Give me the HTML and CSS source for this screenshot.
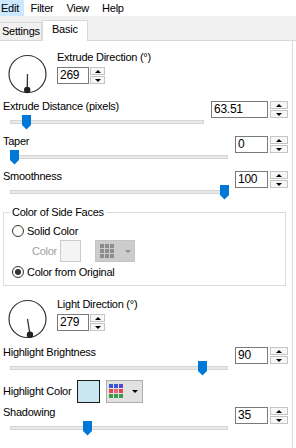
FILE: index.html
```html
<!DOCTYPE html>
<html>
<head>
  <title>Extrude</title>
  <link rel="stylesheet" href="styles.css">
</head>
<body>

  <div class="menubar">
    <span class="menu-item active">Edit</span>
    <span class="menu-item">Filter</span>
    <span class="menu-item">View</span>
    <span class="menu-item">Help</span>
  </div>

  <div class="tabs">
    <div class="tab">Settings</div>
    <div class="tab selected">Basic</div>
  </div>

  <div class="panel">

    <div class="dial-row first">
      <svg class="dial" width="40" height="40" viewBox="0 0 40 40">
        <circle cx="19.5" cy="20" r="18.5" fill="none" stroke="#333" stroke-width="1.2"/>
        <line x1="19.5" y1="20" x2="19.2" y2="36" stroke="#333" stroke-width="1.3"/>
        <circle cx="19.2" cy="36" r="3.2" fill="#222"/>
      </svg>
      <div class="dial-info">
        <div class="label">Extrude Direction (°)</div>
        <div class="spin angle">
          <div class="spin-value">269</div>
          <div class="spin-buttons">
            <div class="spin-btn"><span class="arrow-up"></span></div>
            <div class="spin-btn"><span class="arrow-down"></span></div>
          </div>
        </div>
      </div>
    </div>

    <div class="slider-row">
      <div class="slider-col">
        <div class="label">Extrude Distance (pixels)</div>
        <div class="slider">
          <div class="track"></div>
          <svg class="thumb" style="left:12px" width="9" height="15" viewBox="0 0 9 15"><polygon points="0,0 9,0 9,10 4.5,14.5 0,10" fill="#0078d7"/></svg>
        </div>
      </div>
      <div class="spin">
        <div class="spin-value wide">63.51</div>
        <div class="spin-buttons">
          <div class="spin-btn"><span class="arrow-up"></span></div>
          <div class="spin-btn"><span class="arrow-down"></span></div>
        </div>
      </div>
    </div>

    <div class="slider-row">
      <div class="slider-col">
        <div class="label">Taper</div>
        <div class="slider">
          <div class="track"></div>
          <svg class="thumb" style="left:0px" width="9" height="15" viewBox="0 0 9 15"><polygon points="0,0 9,0 9,10 4.5,14.5 0,10" fill="#0078d7"/></svg>
        </div>
      </div>
      <div class="spin">
        <div class="spin-value">0</div>
        <div class="spin-buttons">
          <div class="spin-btn"><span class="arrow-up"></span></div>
          <div class="spin-btn"><span class="arrow-down"></span></div>
        </div>
      </div>
    </div>

    <div class="slider-row">
      <div class="slider-col">
        <div class="label">Smoothness</div>
        <div class="slider">
          <div class="track"></div>
          <svg class="thumb" style="left:210px" width="9" height="15" viewBox="0 0 9 15"><polygon points="0,0 9,0 9,10 4.5,14.5 0,10" fill="#0078d7"/></svg>
        </div>
      </div>
      <div class="spin">
        <div class="spin-value">100</div>
        <div class="spin-buttons">
          <div class="spin-btn"><span class="arrow-up"></span></div>
          <div class="spin-btn"><span class="arrow-down"></span></div>
        </div>
      </div>
    </div>

    <fieldset class="group">
      <legend>Color of Side Faces</legend>
      <div class="radio-row first">
        <span class="radio"></span>
        <span>Solid Color</span>
      </div>
      <div class="color-row">
        <span class="disabled-text">Color</span>
        <span class="swatch disabled"></span>
        <span class="picker disabled">
          <svg width="16" height="15" viewBox="0 0 16 15">
            <rect x="0" y="0" width="4" height="4" fill="#8c8c8c"/><rect x="5" y="0" width="4" height="4" fill="#8c8c8c"/><rect x="10" y="0" width="4" height="4" fill="#8c8c8c"/>
            <rect x="0" y="5" width="4" height="4" fill="#8c8c8c"/><rect x="5" y="5" width="4" height="4" fill="#8c8c8c"/><rect x="10" y="5" width="4" height="4" fill="#8c8c8c"/>
            <rect x="0" y="10" width="4" height="4" fill="#8c8c8c"/><rect x="5" y="10" width="4" height="4" fill="#8c8c8c"/><rect x="10" y="10" width="4" height="4" fill="#8c8c8c"/>
          </svg>
          <span class="arrow-down grey"></span>
        </span>
      </div>
      <div class="radio-row">
        <span class="radio checked"></span>
        <span>Color from Original</span>
      </div>
    </fieldset>

    <div class="dial-row second">
      <svg class="dial" width="40" height="40" viewBox="0 0 40 40">
        <circle cx="19.5" cy="20" r="18.5" fill="none" stroke="#333" stroke-width="1.2"/>
        <line x1="19.5" y1="20" x2="22" y2="35.8" stroke="#333" stroke-width="1.3"/>
        <circle cx="22" cy="35.8" r="3.2" fill="#222"/>
      </svg>
      <div class="dial-info">
        <div class="label">Light Direction (°)</div>
        <div class="spin angle">
          <div class="spin-value">279</div>
          <div class="spin-buttons">
            <div class="spin-btn"><span class="arrow-up"></span></div>
            <div class="spin-btn"><span class="arrow-down"></span></div>
          </div>
        </div>
      </div>
    </div>

    <div class="slider-row brightness">
      <div class="slider-col">
        <div class="label">Highlight Brightness</div>
        <div class="slider">
          <div class="track"></div>
          <svg class="thumb" style="left:188px" width="9" height="15" viewBox="0 0 9 15"><polygon points="0,0 9,0 9,10 4.5,14.5 0,10" fill="#0078d7"/></svg>
        </div>
      </div>
      <div class="spin">
        <div class="spin-value">90</div>
        <div class="spin-buttons">
          <div class="spin-btn"><span class="arrow-up"></span></div>
          <div class="spin-btn"><span class="arrow-down"></span></div>
        </div>
      </div>
    </div>

    <div class="highlight-row">
      <span class="label">Highlight Color</span>
      <span class="swatch light"></span>
      <span class="picker">
        <svg width="16" height="15" viewBox="0 0 16 15">
          <rect x="0" y="0" width="4" height="4" fill="#3b55d9"/><rect x="5" y="0" width="4" height="4" fill="#3b55d9"/><rect x="10" y="0" width="4" height="4" fill="#5a44d0"/>
          <rect x="0" y="5" width="4" height="4" fill="#e04848"/><rect x="5" y="5" width="4" height="4" fill="#e8607c"/><rect x="10" y="5" width="4" height="4" fill="#e04848"/>
          <rect x="0" y="10" width="4" height="4" fill="#3e9b4c"/><rect x="5" y="10" width="4" height="4" fill="#3e9b4c"/><rect x="10" y="10" width="4" height="4" fill="#3e9b4c"/>
        </svg>
        <span class="arrow-down"></span>
      </span>
    </div>

    <div class="slider-row shadowing">
      <div class="slider-col">
        <div class="label">Shadowing</div>
        <div class="slider">
          <div class="track"></div>
          <svg class="thumb" style="left:73px" width="9" height="15" viewBox="0 0 9 15"><polygon points="0,0 9,0 9,10 4.5,14.5 0,10" fill="#0078d7"/></svg>
        </div>
      </div>
      <div class="spin">
        <div class="spin-value">35</div>
        <div class="spin-buttons">
          <div class="spin-btn"><span class="arrow-up"></span></div>
          <div class="spin-btn"><span class="arrow-down"></span></div>
        </div>
      </div>
    </div>

  </div>

</body>
</html>
```

FILE: styles.css
```css
body {
    margin: 0;
    width: 296px;
    height: 448px;
    overflow: hidden;
    background-color: #ffffff;
    font-family: "Liberation Sans", Arial, sans-serif;
    font-size: 11px;
    letter-spacing: -0.25px;
    color: #000000;
}

/* menu */

.menubar {
    display: flex;
    height: 16px;
    background-color: #ffffff;
}

.menu-item {
    line-height: 16px;
    padding: 0 6.5px;
}

.menu-item:first-child {
    padding: 0 5px 0 1px;
}

.menu-item.active {
    background-color: #cce8ff;
}

/* tabs */

.tabs {
    display: flex;
    align-items: flex-end;
    height: 24px;
    background-color: #f0f0f0;
    border-bottom: 1px solid #d9d9d9;
}

.tab {
    box-sizing: border-box;
    width: 42px;
    padding-left: 2px;
    line-height: 17px;
    border-top: 1px solid #d9d9d9;
    border-right: 1px solid #d9d9d9;
}

.tab.selected {
    width: 46px;
    padding: 0 0 3px 9px;
    margin-bottom: -1px;
    background-color: #ffffff;
    border: 1px solid #d9d9d9;
    border-bottom: none;
}

/* panel */

.panel {
    box-sizing: border-box;
    width: 293px;
    height: 407px;
    padding-top: 9px;
    border-right: 1px solid #d9d9d9;
}

.label {
    line-height: 15px;
    white-space: nowrap;
}

.dial-row {
    display: flex;
}

.dial {
    display: block;
    margin-left: 8px;
    margin-top: 4px;
}

.dial-row.second {
    margin-top: 11px;
}

.dial-row.second .dial {
    margin-top: 2px;
}

.dial-info {
    margin-left: 9px;
}

/* spin boxes */

.spin {
    display: flex;
    margin-top: 2px;
    height: 17px;
}

.spin-value {
    box-sizing: border-box;
    width: 33px;
    height: 17px;
    padding-left: 2px;
    line-height: 15px;
    font-size: 12px;
    border: 1px solid #7a7a7a;
    background-color: #ffffff;
}

.spin-value.wide {
    width: 57px;
}

.spin-buttons {
    display: flex;
    flex-direction: column;
    justify-content: space-between;
    width: 18px;
    margin-left: 2px;
}

.spin.angle .spin-value {
    width: 32px;
}

.spin.angle .spin-buttons {
    width: 15px;
    margin-left: 1px;
}

.spin-btn {
    box-sizing: border-box;
    height: 8px;
    display: flex;
    align-items: center;
    justify-content: center;
    border: 1px solid #c4c4c4;
    background-color: #f7f7f7;
}

.arrow-up {
    width: 0;
    height: 0;
    border-left: 3px solid transparent;
    border-right: 3px solid transparent;
    border-bottom: 3px solid #000000;
}

.arrow-down {
    width: 0;
    height: 0;
    border-left: 3px solid transparent;
    border-right: 3px solid transparent;
    border-top: 3px solid #000000;
}

.arrow-down.grey {
    border-top-color: #8c8c8c;
}

/* sliders */

.slider-row {
    display: flex;
    align-items: flex-start;
    margin-top: 4px;
    padding-right: 4px;
}

.dial-row + .slider-row {
    margin-top: 5px;
}

.slider-row.brightness {
    margin-top: 6px;
}

.slider-row.shadowing {
    margin-top: 2px;
}

.slider-col {
    flex: 1;
    padding-left: 3px;
    margin-right: 7px;
}

.slider {
    position: relative;
    height: 16px;
    margin-left: 7px;
}

.track {
    position: absolute;
    left: 0;
    right: 0;
    top: 6px;
    height: 4px;
    box-sizing: border-box;
    background-color: #e7eaea;
    border: 1px solid #d6d6d6;
}

.thumb {
    position: absolute;
    top: 1px;
}

/* group box */

.group {
    margin: 5px 6px 0 3px;
    padding: 0 0 5px 8px;
    min-width: 0;
    border: 1px solid #dcdcdc;
}

.group legend {
    padding: 0 2px;
    margin-left: -2px;
    line-height: 15px;
}

.radio-row {
    display: flex;
    align-items: center;
    gap: 3px;
    height: 16px;
    margin-top: 2px;
}

.radio-row.first {
    margin-top: 3px;
}

.radio {
    box-sizing: border-box;
    width: 12px;
    height: 12px;
    border: 1px solid #333333;
    border-radius: 50%;
    background-color: #ffffff;
    display: flex;
    align-items: center;
    justify-content: center;
}

.radio.checked::after {
    content: "";
    width: 6px;
    height: 6px;
    border-radius: 50%;
    background-color: #333333;
}

.color-row {
    display: flex;
    align-items: center;
    height: 22px;
    margin-top: 1px;
    margin-left: 20px;
}

.disabled-text {
    color: #a0a0a0;
}

.swatch {
    box-sizing: border-box;
    display: block;
}

.swatch.disabled {
    width: 21px;
    height: 22px;
    margin-left: 3px;
    background-color: #f4f4f4;
    border: 1px solid #cccccc;
}

.picker {
    box-sizing: border-box;
    display: flex;
    align-items: center;
    gap: 7px;
    padding-left: 2px;
    height: 23px;
    width: 37px;
    background-color: #e1e1e1;
    border: 1px solid #adadad;
}

.picker.disabled {
    width: 40px;
    height: 22px;
    gap: 9px;
    margin-left: 14px;
    padding-left: 4px;
    background-color: #cccccc;
    border-color: #c4c4c4;
}

/* highlight color */

.highlight-row {
    display: flex;
    align-items: center;
    height: 23px;
    margin-top: 4px;
    padding-left: 3px;
}

.swatch.light {
    width: 23px;
    height: 23px;
    margin-left: 6px;
    background-color: #c8e7f1;
    border: 1px solid #1a1a1a;
}

.highlight-row .picker {
    margin-left: 6px;
}
```
